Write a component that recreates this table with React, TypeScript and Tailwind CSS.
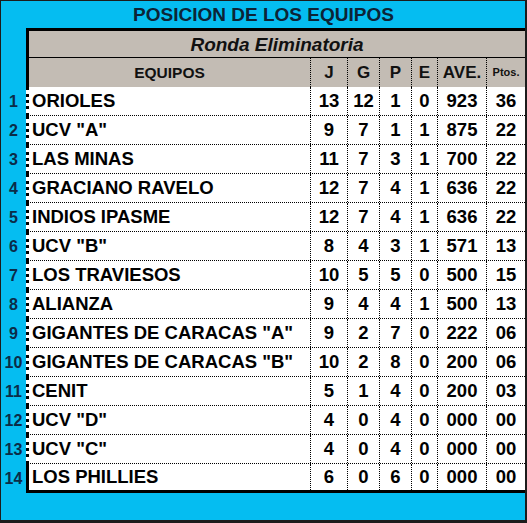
import React from "react";

type Team = { name: string; j: string; g: string; p: string; e: string; ave: string; pts: string };

const TEAMS: Team[] = [
  { name: "ORIOLES", j: "13", g: "12", p: "1", e: "0", ave: "923", pts: "36" },
  { name: 'UCV "A"', j: "9", g: "7", p: "1", e: "1", ave: "875", pts: "22" },
  { name: "LAS MINAS", j: "11", g: "7", p: "3", e: "1", ave: "700", pts: "22" },
  { name: "GRACIANO RAVELO", j: "12", g: "7", p: "4", e: "1", ave: "636", pts: "22" },
  { name: "INDIOS IPASME", j: "12", g: "7", p: "4", e: "1", ave: "636", pts: "22" },
  { name: 'UCV "B"', j: "8", g: "4", p: "3", e: "1", ave: "571", pts: "13" },
  { name: "LOS TRAVIESOS", j: "10", g: "5", p: "5", e: "0", ave: "500", pts: "15" },
  { name: "ALIANZA", j: "9", g: "4", p: "4", e: "1", ave: "500", pts: "13" },
  { name: 'GIGANTES DE CARACAS "A"', j: "9", g: "2", p: "7", e: "0", ave: "222", pts: "06" },
  { name: 'GIGANTES DE CARACAS "B"', j: "10", g: "2", p: "8", e: "0", ave: "200", pts: "06" },
  { name: "CENIT", j: "5", g: "1", p: "4", e: "0", ave: "200", pts: "03" },
  { name: 'UCV "D"', j: "4", g: "0", p: "4", e: "0", ave: "000", pts: "00" },
  { name: 'UCV "C"', j: "4", g: "0", p: "4", e: "0", ave: "000", pts: "00" },
  { name: "LOS PHILLIES", j: "6", g: "0", p: "6", e: "0", ave: "000", pts: "00" },
];

// column widths after the team name column
const COLS = "grid grid-cols-[281px_37px_32px_32px_26px_49px_1fr]";
const cell = "flex items-center justify-center border-l border-dotted border-black";

const App: React.FC = () => {
  return (
    <div
      className="w-[527px] h-[523px] bg-[#05bdf1] border-l border-t border-r-2 border-b-[3px] border-[#1c1c1c] flex flex-col"
      style={{ fontFamily: '"Liberation Sans", Arial, sans-serif' }}
    >
      {/* titulo */}
      <div className="h-[27px] flex items-center justify-center pl-[1px] text-[19px] font-bold text-[#0c2436] leading-none">
        POSICION DE LOS EQUIPOS
      </div>

      <div className="flex">
        <div className="w-[25px] shrink-0" />
        <div className="flex-1 border-l-[3px] border-t-[3px] border-black bg-[#c3bcb4]">
          <div className="h-[27px] flex items-center justify-center border-b border-black text-[19px] font-bold italic text-[#111] leading-none">
            Ronda Eliminatoria
          </div>
          <div className={`${COLS} h-[29px] text-[#111] font-bold leading-none`}>
            <div className="flex items-center justify-center text-[15.5px]">EQUIPOS</div>
            <div className={`${cell} text-[17px]`}>J</div>
            <div className={`${cell} text-[17px]`}>G</div>
            <div className={`${cell} text-[17px]`}>P</div>
            <div className={`${cell} text-[17px]`}>E</div>
            <div className={`${cell} text-[17px]`}>AVE.</div>
            <div className={`${cell} text-[11px]`}>Ptos.</div>
          </div>
        </div>
      </div>

      {TEAMS.map((t, i) => (
        <div key={t.name} className="flex h-[29px]">
          <div className="w-[25px] shrink-0 flex items-center justify-center text-[16px] font-bold text-[#0b2c48] leading-none">
            {i + 1}
          </div>
          <div
            className={`flex-1 bg-white border-l-[3px] border-black ${
              i === TEAMS.length - 1 ? "border-b-[3px] border-b-black" : "border-b border-dotted border-b-black"
            } ${COLS} text-[18.5px] font-bold text-black leading-none`}
          >
            <div className="flex items-center pl-[3px] whitespace-nowrap">{t.name}</div>
            <div className={cell}>{t.j}</div>
            <div className={cell}>{t.g}</div>
            <div className={cell}>{t.p}</div>
            <div className={cell}>{t.e}</div>
            <div className={cell}>{t.ave}</div>
            <div className={cell}>{t.pts}</div>
          </div>
        </div>
      ))}
    </div>
  );
};

export default App;
